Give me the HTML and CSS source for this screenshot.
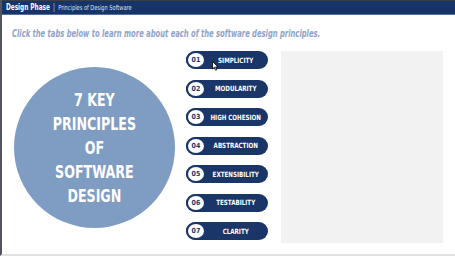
FILE: index.html
```html
<!DOCTYPE html>
<html lang="en">
<head>
    <meta charset="UTF-8">
    <meta name="viewport" content="width=device-width, initial-scale=1.0">
    <title>Principles of Design Software</title>
    <link rel="stylesheet" href="styles.css">
</head>
<body>
    <div class="frame">
        <div class="topbar">
            <div class="crumbs">
                <span class="phase">Design Phase</span>
                <span class="sep">|</span>
                <span class="course">Principles of Design Software</span>
            </div>
        </div>
        <p class="intro"><span>Click the tabs below to learn more about each of the software design principles.</span></p>
        <div class="main">
            <div class="circle">
                <p>7 KEY<br>PRINCIPLES<br>OF<br>SOFTWARE<br>DESIGN</p>
            </div>
            <div class="tabs">
                <div class="tab"><span class="num">01</span><span class="label">SIMPLICITY</span>
                    <svg class="cursor" width="7" height="10" viewBox="0 0 7 10"><path d="M0.5 0.5 L0.5 8 L2.3 6.3 L3.6 9.3 L4.8 8.8 L3.6 5.9 L6 5.9 Z" fill="#fff" stroke="#000" stroke-width="0.8"/></svg>
                </div>
                <div class="tab"><span class="num">02</span><span class="label">MODULARITY</span></div>
                <div class="tab"><span class="num">03</span><span class="label">HIGH COHESION</span></div>
                <div class="tab"><span class="num">04</span><span class="label">ABSTRACTION</span></div>
                <div class="tab"><span class="num">05</span><span class="label">EXTENSIBILITY</span></div>
                <div class="tab"><span class="num">06</span><span class="label">TESTABILITY</span></div>
                <div class="tab"><span class="num">07</span><span class="label">CLARITY</span></div>
            </div>
            <div class="panel"></div>
        </div>
    </div>
</body>
</html>
```

FILE: styles.css
```css
body {
    margin: 0;
    padding: 0;
    background-color: #fff;
    font-family: "DejaVu Sans Condensed", "DejaVu Sans", sans-serif;
}
.frame {
    width: 453px;
    height: 254px;
    border-left: 2px solid #50555e;
    border-bottom: 2px solid #e2e2e2;
    overflow: hidden;
}
.topbar {
    height: 13px;
    background-color: #17346a;
    border-top: 1px solid #3a3e47;
    border-bottom: 1px solid #5670a0;
    display: flex;
    align-items: center;
    padding-left: 4px;
    color: #fff;
}
.crumbs {
    display: flex;
    align-items: center;
    gap: 4px;
    white-space: nowrap;
    transform: scaleX(0.8);
    transform-origin: left center;
}
.phase {
    font-size: 8px;
    font-weight: bold;
}
.sep {
    font-size: 8px;
    color: #c8d2e6;
}
.course {
    font-size: 7px;
    color: #dfe6f2;
}
.intro {
    margin: 7px 0 0 10px;
    height: 12px;
    white-space: nowrap;
}
.intro span {
    display: inline-block;
    font-size: 9.8px;
    font-weight: bold;
    font-style: italic;
    color: #8fa3c9;
    transform: scaleX(0.77);
    transform-origin: left center;
}
.main {
    display: flex;
    margin-top: 17px;
}
.circle {
    width: 161px;
    height: 161px;
    border-radius: 50%;
    background-color: #7f9cc2;
    margin: 16px 0 0 12px;
    display: flex;
    align-items: center;
    justify-content: center;
    text-align: center;
}
.circle p {
    margin: 0;
    color: #fff;
    font-weight: bold;
    font-size: 18px;
    line-height: 24px;
    transform: scaleX(0.78);
}
.tabs {
    display: flex;
    flex-direction: column;
    gap: 10.5px;
    margin-left: 11px;
}
.tab {
    position: relative;
    width: 82px;
    height: 18px;
    border-radius: 9px;
    background-color: #1a3669;
    display: flex;
    align-items: center;
}
.num {
    width: 16px;
    height: 14px;
    border: 2px solid #1a3669;
    border-radius: 50%;
    background-color: #fff;
    color: #1a3669;
    font-size: 7px;
    font-weight: bold;
    display: flex;
    align-items: center;
    justify-content: center;
}
.label {
    flex: 1;
    text-align: center;
    color: #fff;
    font-size: 7.2px;
    font-weight: bold;
    white-space: nowrap;
    padding-right: 3px;
    transform: scaleX(0.86);
}
.cursor {
    position: absolute;
    left: 26px;
    top: 10px;
}
.panel {
    width: 162px;
    height: 192px;
    background-color: #f2f2f2;
    margin-left: 13px;
}
```
